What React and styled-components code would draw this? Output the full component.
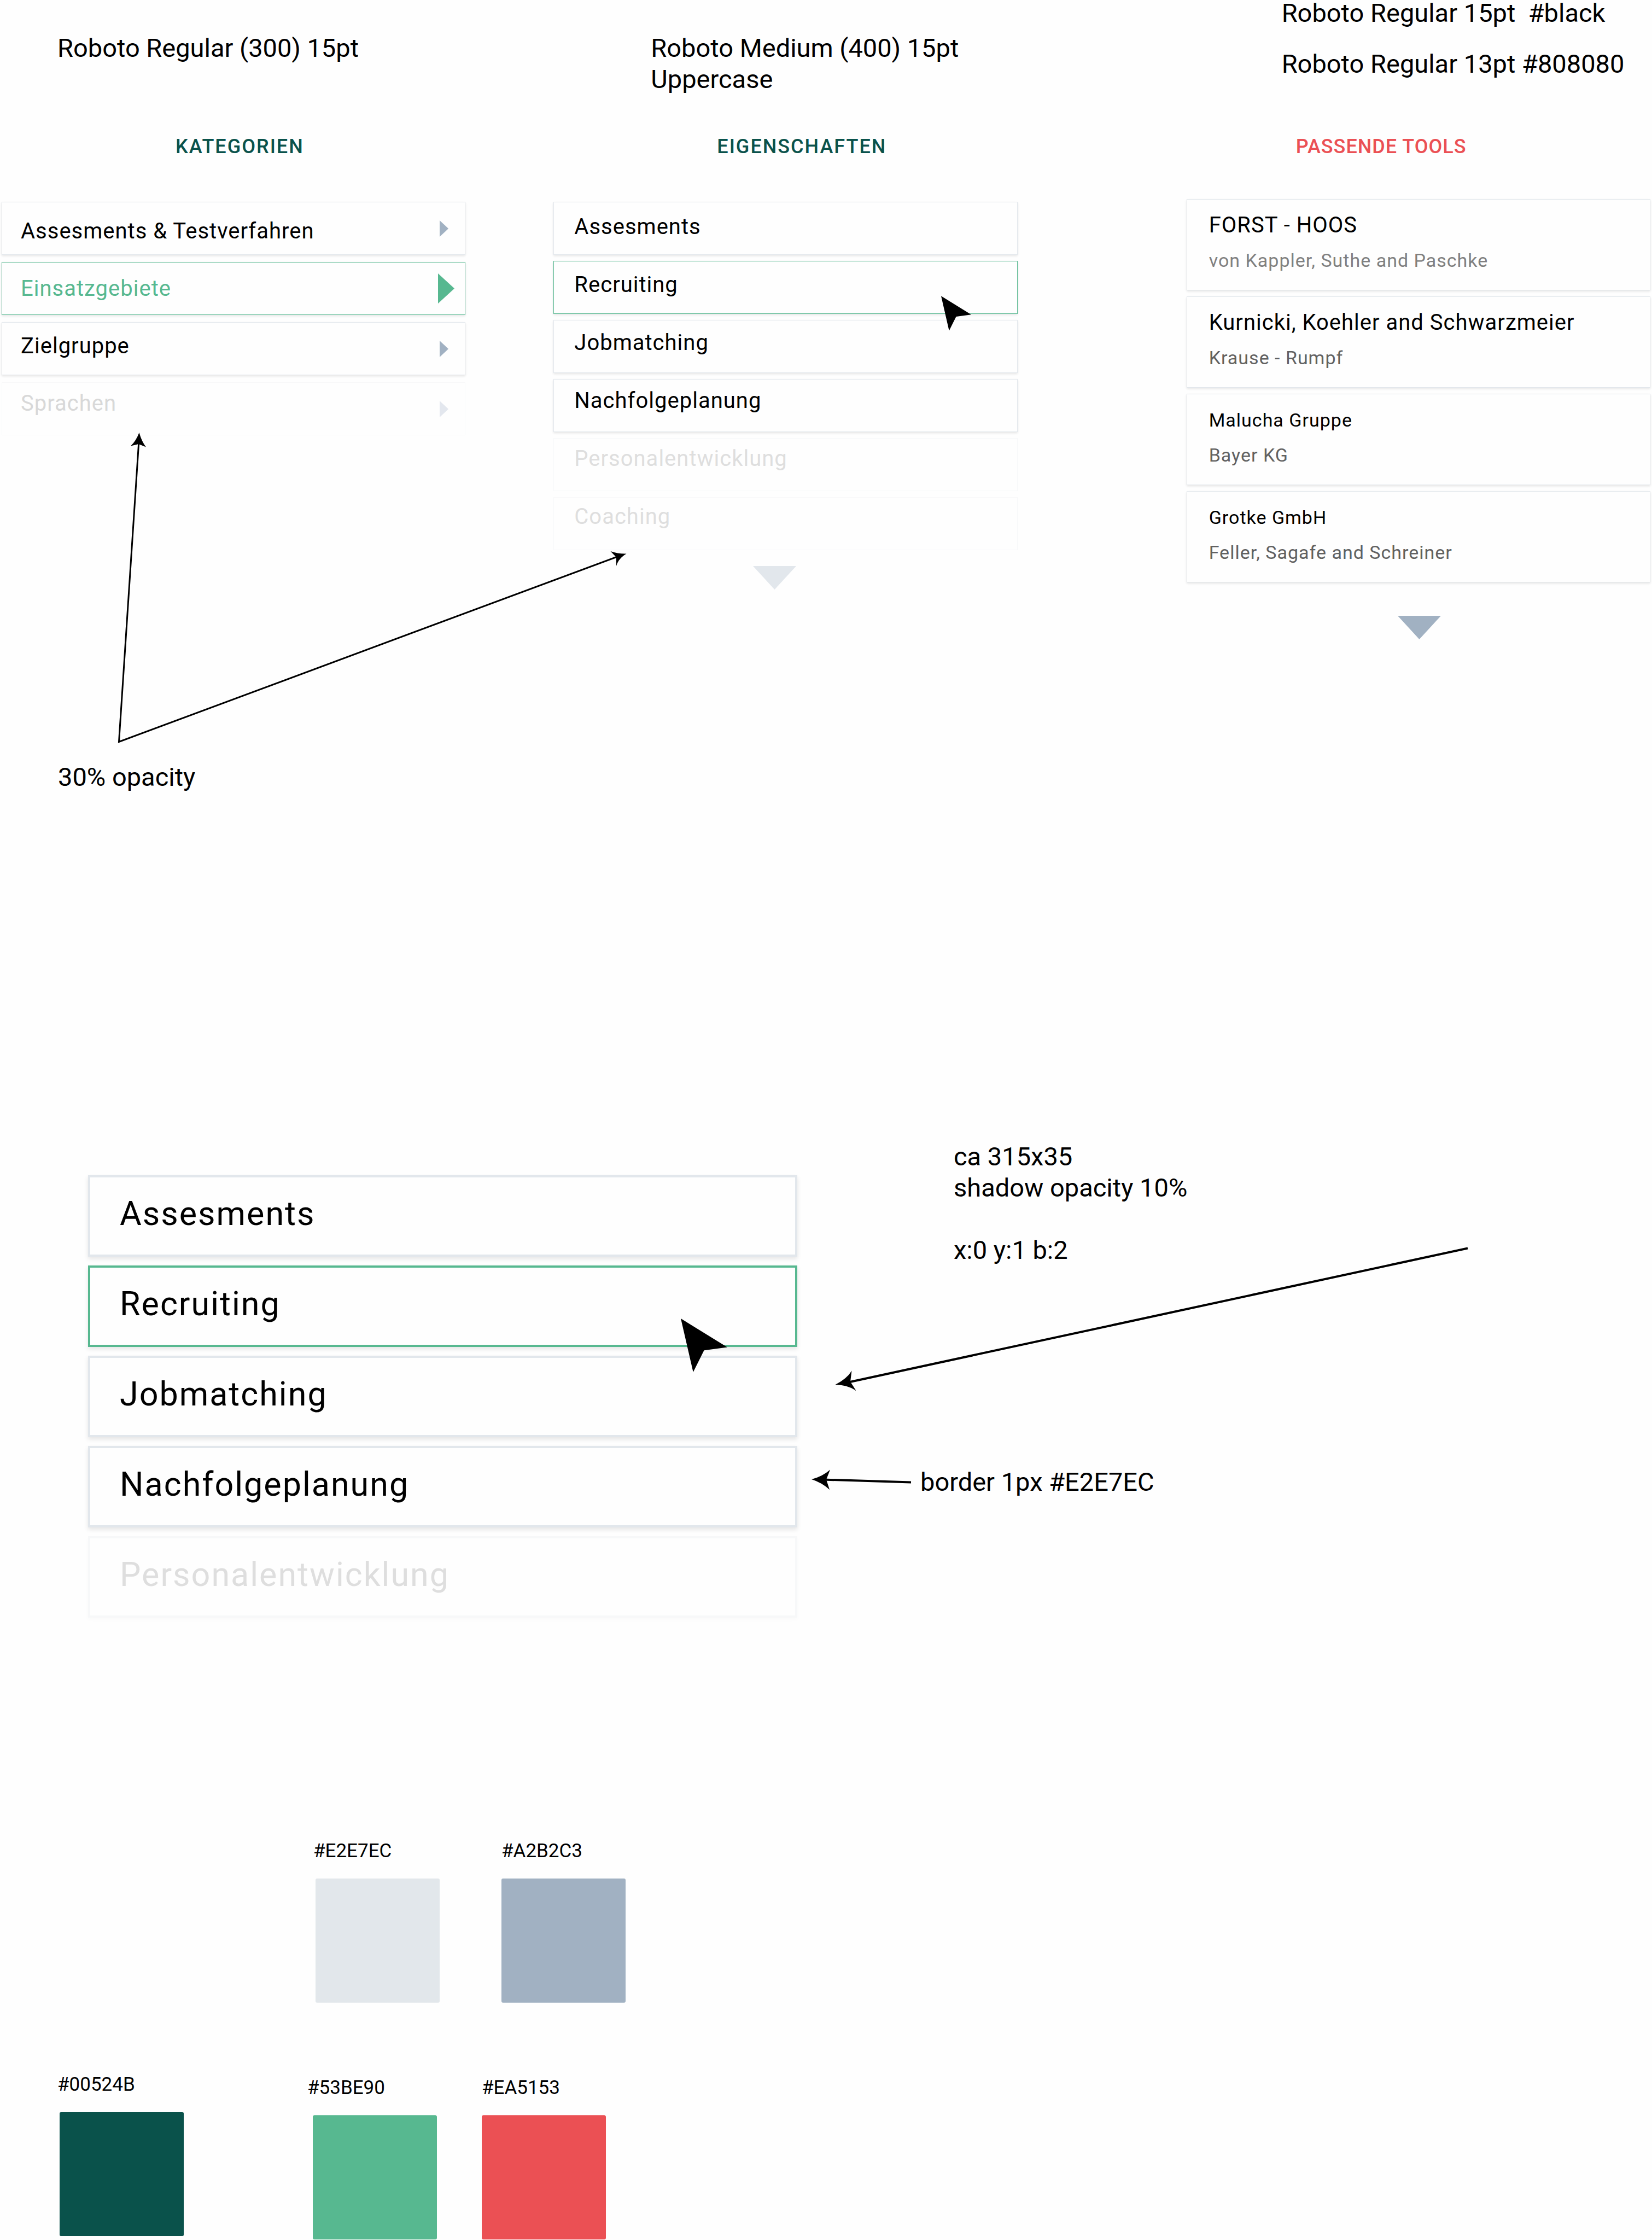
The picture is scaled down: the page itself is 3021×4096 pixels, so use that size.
import React from 'react';
import styled, { createGlobalStyle, css } from 'styled-components';

const color = {
  mist: '#E2E7EC',
  steel: '#A1B1C2',
  pine: '#0A524B',
  green: '#57B890',
  red: '#EB5054',
  fadedLine: '#F7F8F9',
  fadedText: '#DEDEDE',
  fadedIcon: '#E3E7EE',
};

const GlobalStyle = createGlobalStyle`
  *, *::before, *::after { box-sizing: border-box; }
  body {
    margin: 0;
    background: #fefefe;
    color: #000;
    font-family: Roboto, "Liberation Sans", sans-serif;
  }
  h2, p, ul, figure { margin: 0; padding: 0; }
  ul { list-style: none; }
  button { font: inherit; color: inherit; background: none; border: 0; padding: 0; }
`;

const Page = styled.main`
  display: flow-root;
`;

const Note = styled.p`
  font-size: 47px;
  line-height: ${(p) => (p.$tight ? 48 : 57)}px;
  white-space: pre-line;
`;

/* Overview: three columns */

const Overview = styled.section`
  position: relative;
  padding: 0 3px;
`;

const Columns = styled.div`
  display: flex;
  align-items: flex-start;
  gap: 161px;
`;

const Column = styled.div`
  flex: 1 1 0;
  min-width: 0;
  margin-left: ${(p) => p.$apart || 0}px;
`;

const Spec = styled.div`
  display: flex;
  flex-direction: column;
  gap: 45px;
  height: 248px;
  padding-top: ${(p) => p.$top}px;
  padding-left: ${(p) => p.$left}px;
`;

const ColumnTitle = styled.h2`
  font-size: 36px;
  line-height: 40px;
  font-weight: 500;
  letter-spacing: ${(p) => p.$tracking}px;
  color: ${(p) => p.$color};
  padding-left: ${(p) => p.$left}px;
  margin-bottom: ${(p) => p.$below}px;
`;

const Options = styled.ul`
  display: flex;
  flex-direction: column;
  gap: ${(p) => p.$gap}px;
`;

const lineColor = (p) => {
  if (p.disabled) return color.fadedLine;
  return p.$active ? color.green : color.mist;
};

const Option = styled.button`
  position: relative;
  display: flex;
  justify-content: space-between;
  align-items: flex-start;
  width: 100%;
  height: 97px;
  padding-left: ${(p) => p.$inset}px;
  padding-right: ${(p) => (p.$active ? 19 : 30)}px;
  background: #fefefe;
  border: 1px solid ${lineColor};
  text-align: left;
  ${(p) => !p.disabled && css`box-shadow: 0 2px 4px rgba(0, 0, 0, 0.1);`}
`;

/* Labels climb a little further in each following row. */
const OptionLabel = styled.span`
  font-size: 40px;
  line-height: 48px;
  letter-spacing: 1px;
  padding-top: ${(p) => p.$lead - p.$step * p.$index}px;
  color: ${(p) => p.$color};
`;

const IconSlot = styled.span`
  display: flex;
  align-self: center;
`;

const More = styled.button`
  display: block;
  margin-top: ${(p) => p.$top}px;
  margin-left: ${(p) => p.$left}px;
  svg { display: block; }
`;

const ToolCard = styled.li`
  height: 167px;
  padding: 23px 40px 0;
  border: 1px solid ${color.mist};
  background: #fefefe;
  box-shadow: 0 2px 4px rgba(0, 0, 0, 0.1);
`;

const ToolName = styled.p`
  font-size: ${(p) => (p.$small ? 34 : 40)}px;
  line-height: 48px;
  letter-spacing: 1px;
`;

const ToolOwner = styled.p`
  font-size: 34px;
  line-height: 48px;
  letter-spacing: 1px;
  margin-top: 16px;
  color: ${(p) => (p.$light ? '#808080' : '#616161')};
`;

const OpacityNote = styled.div`
  margin-top: 223px;
  padding-left: 103px;
`;

/* Enlarged list */

const Detail = styled.section`
  position: relative;
  display: flex;
  align-items: flex-start;
  gap: 225px;
  margin-top: 637px;
  padding-left: 161px;
`;

const LargeOptions = styled.ul`
  flex: 1297 1 0;
  display: flex;
  flex-direction: column;
  gap: 16px;
  padding-top: 63px;
`;

const LargeOption = styled.button`
  position: relative;
  display: flex;
  align-items: center;
  width: 100%;
  height: 149px;
  padding: 0 0 9px 54px;
  border: 4px solid ${lineColor};
  background: #fefefe;
  font-size: 61px;
  line-height: 72px;
  letter-spacing: 2px;
  text-align: left;
  color: ${(p) => (p.disabled ? color.fadedText : '#000')};
  box-shadow: 0 4px 8px rgba(0, 0, 0, ${(p) => (p.disabled ? 0.02 : 0.1)});
`;

const DetailNotes = styled.div`
  flex: 1338 1 0;
  display: flex;
  flex-direction: column;
  gap: 367px;
`;

const Indented = styled.div`
  padding-left: 61px;
`;

/* Palette */

const Palette = styled.section`
  padding-top: 407px;
  display: flex;
  flex-direction: column;
  gap: 130px;
`;

const SwatchRow = styled.div`
  display: flex;
  align-items: flex-start;
  padding-left: ${(p) => p.$left}px;
  gap: ${(p) => p.$gap}px;
`;

const SwatchGroup = styled.div`
  display: flex;
  gap: 82px;
  padding-top: 6px;
`;

const Swatch = styled.figure`
  display: flex;
  flex-direction: column;
  gap: 30px;
`;

const SwatchName = styled.figcaption`
  font-size: 35px;
  line-height: 40px;
`;

const Chip = styled.div`
  width: 227px;
  height: 227px;
  margin-left: ${(p) => p.$inset || 0}px;
  border-radius: 3px;
  background: ${(p) => p.$color};
`;

/* Drawings */

const Overlay = styled.svg`
  position: absolute;
  top: 0;
  left: 0;
  width: 1px;
  height: 1px;
  overflow: visible;
  pointer-events: none;
`;

const PointerMark = styled.svg`
  position: absolute;
  z-index: 1;
  pointer-events: none;
  right: ${(p) => p.$right}px;
  top: ${(p) => p.$top}px;
`;

const RightArrow = ({ w, h, fill }) => (
  <svg width={w} height={h} viewBox="0 0 10 20" preserveAspectRatio="none" aria-hidden="true">
    <path d="M0 0 L10 10 L0 20 Z" fill={fill} />
  </svg>
);

const DownArrow = ({ fill }) => (
  <svg width="79" height="43" viewBox="0 0 79 43" aria-hidden="true">
    <path d="M0 0 H79 L39.5 43 Z" fill={fill} />
  </svg>
);

const Pointer = ({ width, height, right, top }) => (
  <PointerMark width={width} height={height} viewBox="0 0 85 98" $right={right} $top={top} aria-hidden="true">
    <path d="M0 0 L85 52.5 L42.5 58.3 L22.6 98 Z" />
  </PointerMark>
);

const categories = [
  { name: 'Assesments & Testverfahren' },
  { name: 'Einsatzgebiete', active: true },
  { name: 'Zielgruppe' },
  { name: 'Sprachen', faded: true },
];

const properties = [
  { name: 'Assesments' },
  { name: 'Recruiting', active: true },
  { name: 'Jobmatching' },
  { name: 'Nachfolgeplanung' },
  { name: 'Personalentwicklung', faded: true },
  { name: 'Coaching', faded: true },
];

const tools = [
  { name: 'FORST - HOOS', owner: 'von Kappler, Suthe and Paschke', light: true },
  { name: 'Kurnicki, Koehler and Schwarzmeier', owner: 'Krause - Rumpf' },
  { name: 'Malucha Gruppe', owner: 'Bayer KG', small: true },
  { name: 'Grotke GmbH', owner: 'Feller, Sagafe and Schreiner', small: true },
];

const categoryColor = (c) => {
  if (c.faded) return '#D8D8D8';
  return c.active ? color.green : '#000';
};

const ColorSwatch = ({ name, fill, inset }) => (
  <Swatch>
    <SwatchName>{name}</SwatchName>
    <Chip $color={fill} $inset={inset} />
  </Swatch>
);

export default function App() {
  return (
    <Page>
      <GlobalStyle />
      <Overview>
        <Columns>
          <Column>
            <Spec $top={59} $left={102}>
              <Note>Roboto Regular (300) 15pt</Note>
            </Spec>
            <ColumnTitle $color={color.pine} $tracking={2} $left={318} $below={81}>KATEGORIEN</ColumnTitle>
            <Options $gap={13}>
              {categories.map((c, i) => (
                <li key={c.name}>
                  <Option type="button" $active={c.active} disabled={c.faded} $inset={34}>
                    <OptionLabel $lead={29} $step={5} $index={i} $color={categoryColor(c)}>
                      {c.name}
                    </OptionLabel>
                    <IconSlot>
                      {c.active ? (
                        <RightArrow w={30} h={55} fill={color.green} />
                      ) : (
                        <RightArrow w={16} h={30} fill={c.faded ? color.fadedIcon : color.steel} />
                      )}
                    </IconSlot>
                  </Option>
                </li>
              ))}
            </Options>
          </Column>

          <Column>
            <Spec $top={59} $left={178}>
              <Note>{'Roboto Medium (400) 15pt\nUppercase'}</Note>
            </Spec>
            <ColumnTitle $color={color.pine} $tracking={2} $left={299} $below={81}>EIGENSCHAFTEN</ColumnTitle>
            <Options $gap={11}>
              {properties.map((c, i) => (
                <li key={c.name}>
                  <Option type="button" $active={c.active} disabled={c.faded} $inset={37}>
                    <OptionLabel $lead={21} $step={2} $index={i} $color={c.faded ? color.fadedText : '#000'}>
                      {c.name}
                    </OptionLabel>
                    {c.active && <Pointer width={55} height={64} right={84} top={63} />}
                  </Option>
                </li>
              ))}
            </Options>
            <More type="button" aria-label="Weitere Eigenschaften" $top={29} $left={365}>
              <DownArrow fill={color.mist} />
            </More>
          </Column>

          <Column $apart={148}>
            <Spec $top={0} $left={174}>
              <Note $tight>Roboto Regular 15pt &nbsp;#black</Note>
              <Note $tight>Roboto Regular 13pt #808080</Note>
            </Spec>
            <ColumnTitle $color={color.red} $tracking={1} $left={200} $below={76}>PASSENDE TOOLS</ColumnTitle>
            <Options $gap={11}>
              {tools.map((t) => (
                <ToolCard key={t.name}>
                  <ToolName $small={t.small}>{t.name}</ToolName>
                  <ToolOwner $light={t.light}>{t.owner}</ToolOwner>
                </ToolCard>
              ))}
            </Options>
            <More type="button" aria-label="Weitere Tools" $top={61} $left={386}>
              <DownArrow fill={color.steel} />
            </More>
          </Column>
        </Columns>

        <OpacityNote>
          <Note>30% opacity</Note>
        </OpacityNote>

        <Overlay aria-hidden="true">
          <path d="M254 806 L217.5 1356.5 L1134 1016" fill="none" stroke="#000" strokeWidth="3" />
          <path d="M254.5 791 Q259 807 267 817.5 L253.6 812 L239 815.5 Q249 806 254.5 791 Z" />
          <path d="M1145.5 1012.5 Q1131 1021 1127 1035 L1127 1019 L1116.5 1008 Q1131 1013 1145.5 1012.5 Z" />
        </Overlay>
      </Overview>

      <Detail>
        <LargeOptions>
          {properties.slice(0, 5).map((c) => (
            <li key={c.name}>
              <LargeOption type="button" $active={c.active} disabled={c.faded}>
                {c.name}
                {c.active && <Pointer width={85} height={98} right={124} top={93} />}
              </LargeOption>
            </li>
          ))}
        </LargeOptions>
        <DetailNotes>
          <Indented>
            <Note>{'ca 315x35\nshadow opacity 10%\n\nx:0 y:1 b:2'}</Note>
          </Indented>
          <Note>border 1px #E2E7EC</Note>
        </DetailNotes>
        <Overlay aria-hidden="true">
          <path d="M2684 196.5 L1545 443 M1666 624.5 L1505 619.5" fill="none" stroke="#000" strokeWidth="4" />
          <path d="M1527.5 446 Q1549 435 1557.5 420.5 L1555 440.5 L1565.5 457 Q1549 446 1527.5 446 Z" />
          <path d="M1484 619 Q1504 614 1518 601.5 L1511 619.5 L1517 638 Q1503 625 1484 619 Z" />
        </Overlay>
      </Detail>

      <Palette>
        <SwatchRow $left={573} $gap={113}>
          <ColorSwatch name="#E2E7EC" fill="#E2E7EB" inset={4} />
          <ColorSwatch name="#A2B2C3" fill={color.steel} />
        </SwatchRow>
        <SwatchRow $left={105} $gap={226}>
          <ColorSwatch name="#00524B" fill={color.pine} inset={4} />
          <SwatchGroup>
            <ColorSwatch name="#53BE90" fill={color.green} inset={10} />
            <ColorSwatch name="#EA5153" fill={color.red} />
          </SwatchGroup>
        </SwatchRow>
      </Palette>
    </Page>
  );
}
